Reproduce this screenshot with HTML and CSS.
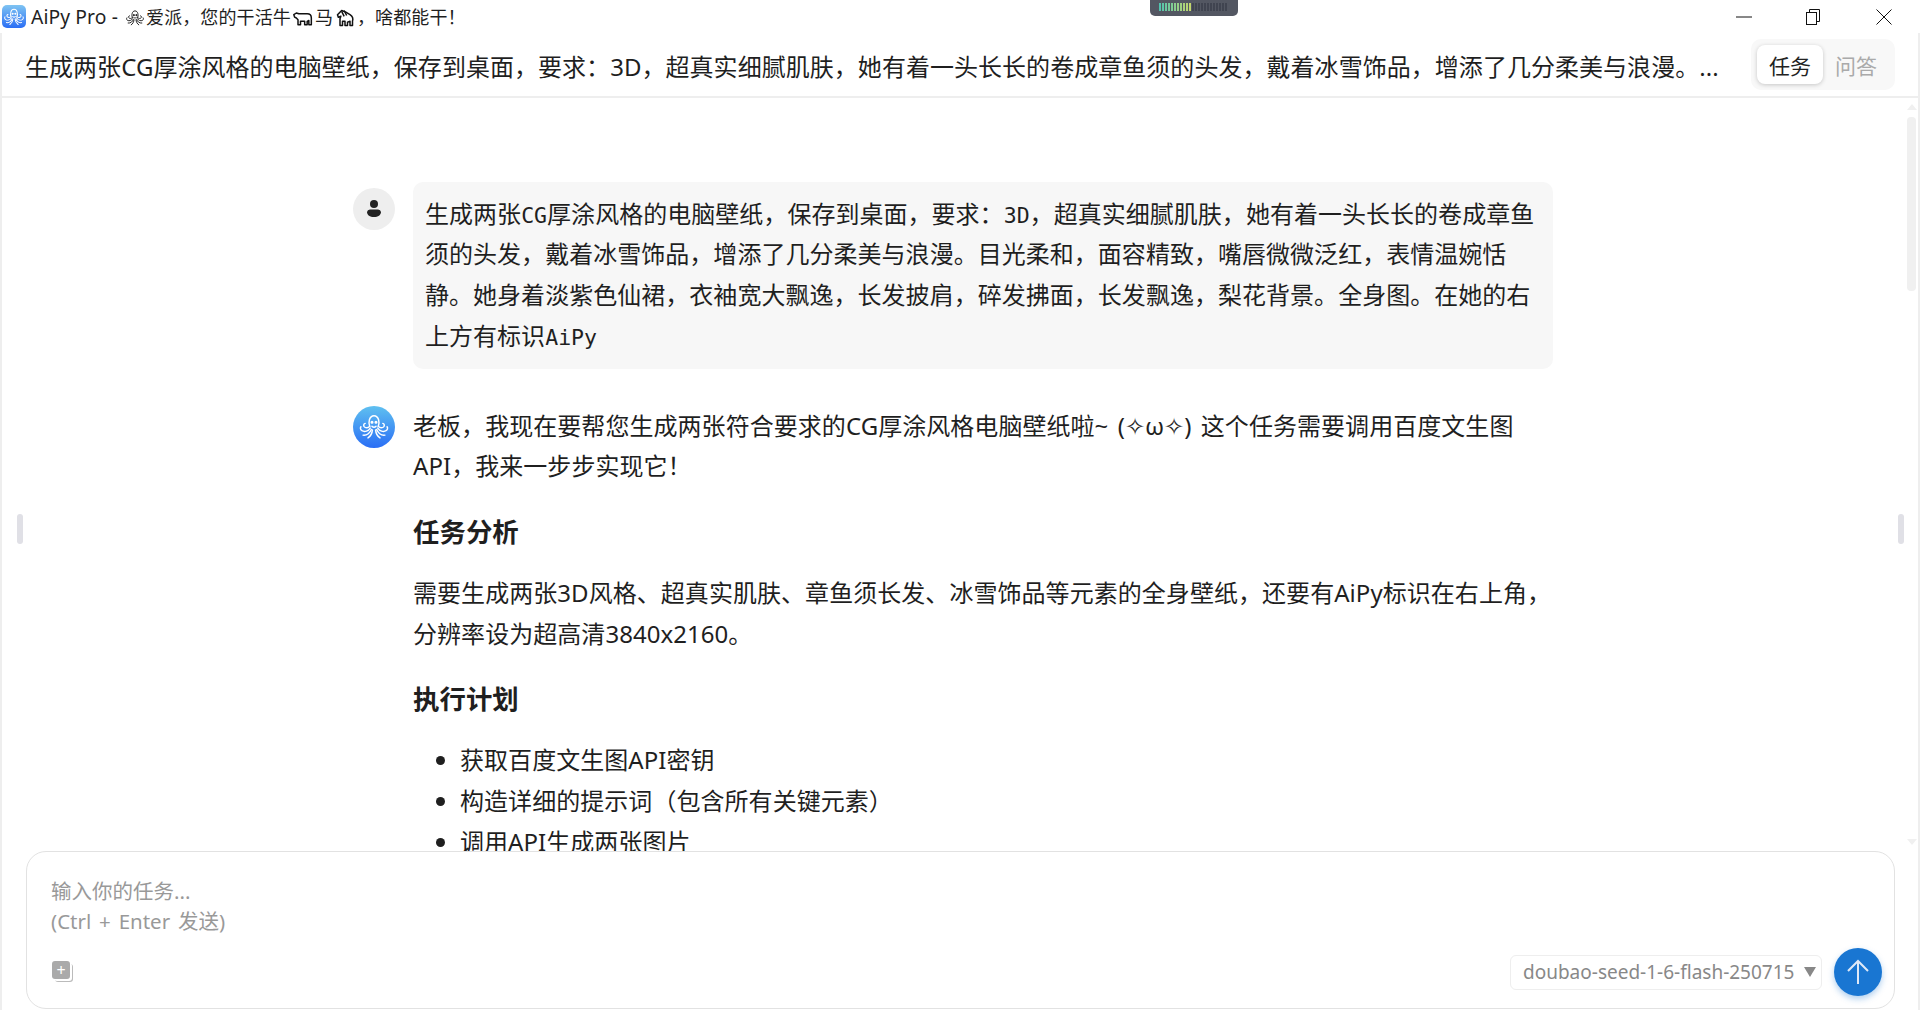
FILE: index.html
```html
<!DOCTYPE html>
<html lang="zh-CN">
  <head>
    <meta charset="UTF-8" />
    <title>AiPy Pro</title>
    <link rel="stylesheet" href="styles.css">
  </head>
  <body>
    <svg class="defs">
      <symbol id="octopus" viewBox="0 0 24 24" fill="none" stroke="currentColor" stroke-width="1.1" stroke-linecap="round">
        <path d="M8.800 11.500C7.600 9 8.300 3.500 12 3.500s4.400 5.500 3.200 8" />
        <circle cx="10.500" cy="8.500" r=".6" fill="currentColor" />
        <circle cx="13.500" cy="8.500" r=".6" fill="currentColor" />
        <path d="M10.500 11.500c.8.700 2.200.7 3 0" />
        <g id="arms">
          <path d="M8.800 11.500C7.500 13 5.500 13 4.500 11.500c-.5-1-.1-2 .9-2.200" />
          <path d="M9.200 12.800C7.800 15 5 16 3 14.800c-1.200-.8-1.500-2-.8-3" />
          <path d="M10 13.800c-.8 2.500-3.200 4.700-6.200 4.300" />
          <path d="M10.800 14.200c-.2 2.500-1.300 4.700-3.300 6" />
        </g>
        <g transform="translate(24 0) scale(-1 1)">
          <path d="M8.800 11.500C7.500 13 5.500 13 4.500 11.500c-.5-1-.1-2 .9-2.200" />
          <path d="M9.200 12.800C7.800 15 5 16 3 14.800c-1.200-.8-1.500-2-.8-3" />
          <path d="M10 13.800c-.8 2.500-3.200 4.700-6.200 4.300" />
          <path d="M10.800 14.200c-.2 2.500-1.300 4.700-3.300 6" />
        </g>
      </symbol>
    </svg>

    <div class="titlebar">
      <div class="app-icon"><svg width="22" height="22"><use href="#octopus" /></svg></div>
      <div class="app-title"><span class="latin">AiPy Pro - </span><svg class="emoji emoji-octopus" viewBox="0 0 24 24"><use href="#octopus" /></svg>爱派，您的干活牛<svg class="emoji" viewBox="0 0 24 24" fill="none" stroke="#111" stroke-width="1.8" stroke-linejoin="round"><path d="M1 8l3-2 3 1h10c3 0 5 2 5 5v8h-3v-5l-2 1v4h-3v-4H9v4H6v-6L4 12l-2-1z" /></svg>马<svg class="emoji" viewBox="0 0 24 24" fill="none" stroke="#111" stroke-width="1.8" stroke-linejoin="round"><path d="M3 8l5-5 5 2 5 3c3 2 4 5 3 8v5h-3v-5l-3 1v4h-3v-5H9v5H6v-8l1-3-3 1z" /><path d="M8 4l3 6M11 3l3 6" /></svg>，啥都能干！</div>
      <div class="window-buttons">
        <svg width="16" height="16" viewBox="0 0 16 16"><path d="M0 8h16" stroke="#111" /></svg>
        <svg class="restore" width="16" height="16" viewBox="0 0 16 16" fill="none" stroke="#111"><rect x="1.500" y="3.500" width="10" height="12" /><path d="M4.500 3.500v-3h10v12h-3" /></svg>
        <svg width="16" height="16" viewBox="0 0 16 16" fill="none" stroke="#111"><path d="M0.500 0.500l15 15M15.500 0.500l-15 15" /></svg>
      </div>
      <div class="notch">
        <div class="meter"></div>
        <div class="meter-rest"></div>
      </div>
    </div>

    <div class="window">
      <div class="header">
        <div class="task-title">生成两张CG厚涂风格的电脑壁纸，保存到桌面，要求：3D，超真实细腻肌肤，她有着一头长长的卷成章鱼须的头发，戴着冰雪饰品，增添了几分柔美与浪漫。...</div>
        <div class="mode-switch">
          <div class="mode active">任务</div>
          <div class="mode">问答</div>
        </div>
      </div>

      <div class="main">
        <div class="chat">
          <div class="handle handle-left"></div>
          <div class="handle handle-right"></div>
          <div class="column">
            <div class="message">
              <div class="avatar avatar-user">
                <svg width="20" height="20" viewBox="0 0 20 20" fill="#222"><circle cx="10" cy="5" r="4" /><path d="M3 13a3 3 0 0 1 3-2.500h8a3 3 0 0 1 3 2.500c0 3-3 5-7 5s-7-2-7-5z" /></svg>
              </div>
              <div class="bubble">生成两张<span class="mono">CG</span>厚涂风格的电脑壁纸，保存到桌面，要求：<span class="mono">3D</span>，超真实细腻肌肤，她有着一头长长的卷成章鱼须的头发，戴着冰雪饰品，增添了几分柔美与浪漫。目光柔和，面容精致，嘴唇微微泛红，表情温婉恬静。她身着淡紫色仙裙，衣袖宽大飘逸，长发披肩，碎发拂面，长发飘逸，梨花背景。全身图。在她的右上方有标识<span class="mono">AiPy</span></div>
            </div>

            <div class="message">
              <div class="avatar avatar-bot"><svg width="32" height="32"><use href="#octopus" /></svg></div>
              <div class="answer">
                <p>老板，我现在要帮您生成两张符合要求的CG厚涂风格电脑壁纸啦~ (✧ω✧) 这个任务需要调用百度文生图API，我来一步步实现它！</p>
                <h3>任务分析</h3>
                <p>需要生成两张3D风格、超真实肌肤、章鱼须长发、冰雪饰品等元素的全身壁纸，还要有AiPy标识在右上角，分辨率设为超高清3840x2160。</p>
                <h3>执行计划</h3>
                <ul>
                  <li>获取百度文生图API密钥</li>
                  <li>构造详细的提示词（包含所有关键元素）</li>
                  <li>调用API生成两张图片</li>
                </ul>
              </div>
            </div>
          </div>
        </div>
        <div class="scrollbar">
          <div class="arrow-up"></div>
          <div class="thumb"></div>
          <div class="arrow-down"></div>
        </div>
      </div>

      <div class="input-box">
        <div class="placeholder">输入你的任务...<br />(Ctrl + Enter 发送)</div>
        <div class="input-tools">
          <div class="attach">+</div>
          <div class="model-select">
            <span>doubao-seed-1-6-flash-250715</span>
            <i class="caret"></i>
          </div>
          <div class="send">
            <svg width="24" height="26" viewBox="0 0 24 26" fill="none" stroke="#dfe9f7" stroke-width="2"><path d="M12 25V2M2 12L12 2l10 10" /></svg>
          </div>
        </div>
      </div>
    </div>
  </body>
</html>
```

FILE: styles.css
```css
html,
body {
  height: 100%;
}
body {
  margin: 0;
  background-color: white;
  color: #1f1f1f;
  font-family: "Noto Sans", "Noto Sans CJK SC", sans-serif;
  overflow: hidden;
}
.defs {
  display: none;
}

/* title bar */
.titlebar {
  position: relative;
  height: 33px;
  display: flex;
  align-items: center;
  padding-left: 2px;
}
.app-icon {
  width: 24px;
  height: 23px;
  border-radius: 5px;
  background: linear-gradient(#7fc4f2, #2a6ef5);
  color: white;
  display: flex;
  align-items: center;
  justify-content: center;
}
.app-title {
  margin-left: 5px;
  font-size: 18px;
  letter-spacing: 0.1px;
  white-space: pre;
}
.latin {
  font-size: 19.300px;
}
.emoji {
  width: 20px;
  height: 20px;
  margin: 0 2px;
  color: #111;
  vertical-align: -4px;
}
.emoji-octopus {
  margin-left: 2px;
  margin-right: 1px;
}
.window-buttons {
  margin-left: auto;
  width: 156px;
  margin-right: 28px;
  display: flex;
  justify-content: space-between;
}
.restore {
  margin-left: -3px;
}
.notch {
  position: absolute;
  left: 1150px;
  top: 0;
  width: 88px;
  height: 16px;
  box-sizing: border-box;
  padding: 3px 9px 0;
  display: flex;
  background-color: #535762;
  border-radius: 0 0 5px 5px;
}
.meter {
  width: 33px;
  height: 8px;
  background: repeating-linear-gradient(90deg, transparent 0 2px, #535762 2px 3px), linear-gradient(90deg, #4fc3b0, #c8d86a);
}
.meter-rest {
  width: 36px;
  height: 8px;
  background: repeating-linear-gradient(90deg, #404450 0 2px, #535762 2px 3px);
}

/* window body */
.window {
  height: 977px;
  display: flex;
  flex-direction: column;
  box-sizing: border-box;
  border-left: 2px solid #eeeeee;
  border-right: 2px solid #eeeeee;
}
.header {
  height: 65px;
  flex: none;
  box-sizing: border-box;
  border-bottom: 2px solid #eeeeee;
  display: flex;
  align-items: center;
  padding-left: 23px;
  padding-right: 23px;
}
.task-title {
  font-size: 24px;
  letter-spacing: 0.04px;
  padding-top: 2px;
  white-space: nowrap;
  overflow: hidden;
}
.mode-switch {
  margin-left: auto;
  width: 144px;
  height: 51px;
  box-sizing: border-box;
  padding: 6px;
  display: flex;
  background-color: #f8f8f8;
  border-radius: 10px;
}
.mode {
  flex: 1;
  display: flex;
  align-items: center;
  justify-content: center;
  font-size: 21px;
  color: #aaaaaa;
  border-radius: 8px;
}
.mode.active {
  background-color: white;
  color: #222222;
  box-shadow: 0 1px 4px rgba(0, 0, 0, 0.2);
}

/* chat area */
.main {
  flex: 1;
  min-height: 0;
  display: flex;
  position: relative;
}
.chat {
  flex: 1;
  overflow: hidden;
  padding-top: 84px;
  position: relative;
}
.column {
  width: 1200px;
  margin: 0 auto;
}
.handle {
  position: absolute;
  top: 416px;
  width: 6px;
  height: 30px;
  background-color: #e0e0e6;
  border-radius: 3px;
}
.handle-left {
  left: 15px;
}
.handle-right {
  right: 0;
}
.message {
  display: flex;
  gap: 18px;
  margin-bottom: 36.500px;
}
.avatar {
  flex: none;
  width: 42px;
  height: 42px;
  border-radius: 50%;
  display: flex;
  align-items: center;
  justify-content: center;
  margin-top: 6px;
}
.avatar-user {
  background-color: #eeeeee;
}
.avatar-bot {
  background: linear-gradient(#5fc0f0, #2a6ef5);
  color: white;
  margin-top: 0;
}
.bubble {
  width: 1140px;
  box-sizing: border-box;
  background-color: #f7f7f7;
  border-radius: 10px;
  padding: 11.500px 12px 12.500px;
  font-size: 24px;
  letter-spacing: 0.03px;
  line-height: 40.800px;
}
.mono {
  font-family: "DejaVu Sans Mono", monospace;
  font-size: 21.500px;
  line-height: 0;
}
.answer {
  width: 1140px;
  font-size: 24px;
  letter-spacing: 0.05px;
  word-spacing: 3px;
  line-height: 40.800px;
}
.answer p {
  margin: 0;
}
.answer h3 {
  margin: 24.500px 0 20px;
  font-size: 26.400px;
  line-height: 41px;
  font-weight: 700;
}
.answer ul {
  margin: 20.500px 0 0;
  padding-left: 47px;
}

/* scrollbar */
.scrollbar {
  flex: none;
  width: 14px;
  position: relative;
}
.thumb {
  position: absolute;
  top: 19px;
  left: 3px;
  width: 9px;
  height: 174px;
  background-color: #f0f0f0;
  border-radius: 4px;
}
.arrow-up,
.arrow-down {
  position: absolute;
  left: 3px;
  border-left: 5px solid transparent;
  border-right: 5px solid transparent;
}
.arrow-up {
  top: 6px;
  border-bottom: 6px solid #f0f0f0;
}
.arrow-down {
  top: 741px;
  border-top: 6px solid #f0f0f0;
}

/* input */
.input-box {
  flex: none;
  position: absolute;
  left: 26px;
  top: 851px;
  width: 1869px;
  height: 158px;
  box-sizing: border-box;
  background-color: white;
  border: 1px solid #e2e2e2;
  border-radius: 20px;
  padding: 24px 11px 12px 24px;
  display: flex;
  flex-direction: column;
  justify-content: space-between;
}
.placeholder {
  font-size: 20.500px;
  word-spacing: 2.500px;
  line-height: 30px;
  color: #999999;
}
.input-tools {
  display: flex;
  align-items: center;
}
.attach {
  width: 18px;
  height: 18px;
  margin-left: 1px;
  margin-bottom: 4px;
  background-color: #aaaaaa;
  color: white;
  border-radius: 3px;
  font-size: 16px;
  line-height: 18px;
  text-align: center;
  box-shadow: 2px 2px 0 #ffffff, 3px 3px 0 #bbbbbb;
}
.model-select {
  margin-left: auto;
  width: 312px;
  height: 35px;
  box-sizing: border-box;
  border: 1px solid #eeeeee;
  border-radius: 6px;
  padding-left: 12px;
  display: flex;
  align-items: center;
  font-size: 19px;
  color: #888888;
  white-space: nowrap;
}
.caret {
  margin-left: 10px;
  border-left: 6px solid transparent;
  border-right: 6px solid transparent;
  border-top: 10px solid #888888;
}
.send {
  margin-left: 12px;
  margin-right: 1px;
  width: 48px;
  height: 48px;
  border-radius: 50%;
  background-color: #1976d2;
  box-shadow: 0 3px 6px rgba(25, 118, 210, 0.35);
  display: flex;
  align-items: center;
  justify-content: center;
}
```
